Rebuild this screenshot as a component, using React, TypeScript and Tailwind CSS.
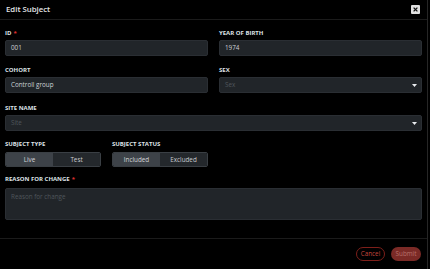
import { useState } from 'react';

const font = { fontFamily: '"Open Sans", "Liberation Sans", sans-serif' };

function Label({ text, required }: { text: string; required?: boolean }) {
  return (
    <div className="h-[8px] leading-[8px] text-[6px] font-bold uppercase text-[#dee2e6] whitespace-nowrap">
      {text}
      {required && <span className="text-[#e03131] ml-[2px]">*</span>}
    </div>
  );
}

function Caret() {
  return (
    <svg width="5" height="3" viewBox="0 0 5 3" className="shrink-0">
      <path d="M0 0 H5 L2.5 3 Z" fill="#e9ecef" />
    </svg>
  );
}

function Input({ value, placeholder, select }: { value?: string; placeholder?: string; select?: boolean }) {
  return (
    <div className="h-[16px] rounded-[2px] bg-[#212529] border border-[#2a2e33] flex items-center justify-between pl-[5px] pr-[4px] text-[6.3px]">
      <span className={value ? 'text-[#cdd1d5]' : 'text-[#4f555b]'}>{value || placeholder}</span>
      {select && <Caret />}
    </div>
  );
}

function Toggle({ options, value, onChange }: { options: string[]; value: string; onChange: (v: string) => void }) {
  return (
    <div className="h-[15px] w-[96px] flex rounded-[2px] border border-[#3a3f44] overflow-hidden text-[6.3px]">
      {options.map((o) => (
        <button
          key={o}
          onClick={() => onChange(o)}
          className={
            'flex-1 flex items-center justify-center ' +
            (o === value ? 'bg-[#3d4248] text-[#d3d6d9]' : 'bg-[#24282c] text-[#c9ccd0]')
          }
        >
          {o}
        </button>
      ))}
    </div>
  );
}

export default function App() {
  const [type, setType] = useState('Live');
  const [status, setStatus] = useState('Included');

  return (
    <div className="w-[430px] h-[269px] bg-black flex overflow-hidden" style={font}>
      <div className="w-[428px] h-full flex flex-col border-r border-[#262626]">
        {/* header */}
        <div className="h-[20px] shrink-0 border-b border-[#1b1b1b] flex items-center justify-between pl-[6px] pr-[7px]">
          <span className="text-[7.8px] font-semibold text-[#e4e6e8]">Edit Subject</span>
          <button className="w-[9px] h-[9px] rounded-[1px] bg-[#e1e1e1] flex items-center justify-center">
            <svg width="5" height="5" viewBox="0 0 5 5">
              <path d="M0.6 0.6 L4.4 4.4 M4.4 0.6 L0.6 4.4" stroke="#111" strokeWidth="1.3" />
            </svg>
          </button>
        </div>

        {/* body */}
        <div className="flex-1 flex flex-col pl-[5px] pr-[5px] pt-[9px]">
          <div className="grid grid-cols-2 gap-x-[11px]">
            <div className="flex flex-col gap-[3px]">
              <Label text="ID" required />
              <Input value="001" />
            </div>
            <div className="flex flex-col gap-[3px]">
              <Label text="Year of birth" />
              <Input value="1974" />
            </div>
          </div>

          <div className="grid grid-cols-2 gap-x-[11px] mt-[10px]">
            <div className="flex flex-col gap-[3px]">
              <Label text="Cohort" />
              <Input value="Controll group" />
            </div>
            <div className="flex flex-col gap-[3px]">
              <Label text="Sex" />
              <Input placeholder="Sex" select />
            </div>
          </div>

          <div className="flex flex-col gap-[3px] mt-[11px]">
            <Label text="Site name" />
            <Input placeholder="Site" select />
          </div>

          <div className="flex gap-[11px] mt-[9px]">
            <div className="flex flex-col gap-[4px]">
              <Label text="Subject type" />
              <Toggle options={['Live', 'Test']} value={type} onChange={setType} />
            </div>
            <div className="flex flex-col gap-[4px]">
              <Label text="Subject status" />
              <Toggle options={['Included', 'Excluded']} value={status} onChange={setStatus} />
            </div>
          </div>

          <div className="flex flex-col gap-[5px] mt-[8px]">
            <Label text="Reason for change" required />
            <div className="h-[32px] rounded-[2px] bg-[#212529] border border-[#2a2e33] px-[5px] pt-[3px] text-[6.3px] text-[#4f555b]">
              Reason for change
            </div>
          </div>
        </div>

        {/* footer */}
        <div className="h-[31px] shrink-0 border-t border-[#1b1b1b] flex items-center justify-end gap-[6px] pr-[6px]">
          <button className="h-[14px] w-[29px] rounded-full border border-[#7e1f1a] text-[6.3px] text-[#c2453d] flex items-center justify-center">
            Cancel
          </button>
          <button className="h-[14px] w-[30px] rounded-full bg-[#7b2a26] text-[6.3px] text-[#b8706b] flex items-center justify-center">
            Submit
          </button>
        </div>
      </div>
    </div>
  );
}
